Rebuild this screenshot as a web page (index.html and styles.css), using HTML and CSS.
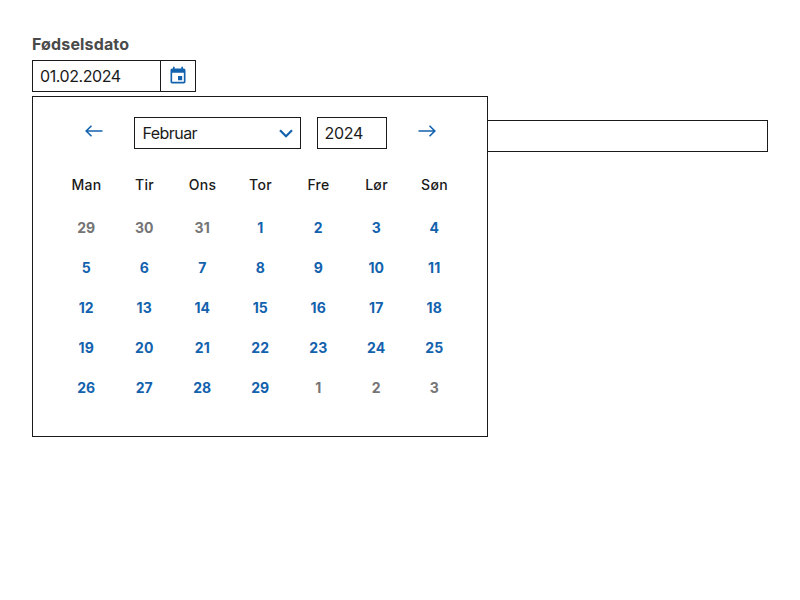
FILE: index.html
```
<!DOCTYPE html>
<html lang="nb">
<head>
<meta charset="utf-8">
<title>Fødselsdato</title>
<link rel="stylesheet" href="styles.css">
</head>
<body>
<main class="form">
  <label class="label" for="date">Fødselsdato</label>
  <div class="datefield">
    <input class="date-input" id="date" value="01.02.2024">
    <button class="date-button" aria-label="Velg dato">
      <svg width="20" height="20" viewBox="0 0 24 24" fill="currentColor"><path d="M17 12h-5v5h5v-5zM16 1v2H8V1H6v2H5c-1.110 0-1.990.9-1.990 2L3 19c0 1.100.890 2 2 2h14c1.100 0 2-.9 2-2V5c0-1.100-.9-2-2-2h-1V1h-2zm3 18H5V8h14v11z"/></svg>
    </button>
    <section class="calendar">
      <div class="nav">
        <button class="arrow" aria-label="Forrige måned"><svg width="18" height="12" viewBox="0 0 18 12"><path d="M6.500 .7 1.200 6l5.300 5.300M1.200 6H17.500"/></svg></button>
        <div class="month"><span class="month-name">Februar</span><svg width="14" height="9" viewBox="0 0 14 9"><path d="M1 1.300l6 6 6-6"/></svg></div>
        <input class="year" value="2024" aria-label="År">
        <button class="arrow" aria-label="Neste måned"><svg width="18" height="12" viewBox="0 0 18 12"><path d="M11.500 .7 16.800 6l-5.300 5.300M16.800 6H.5"/></svg></button>
      </div>
      <div class="grid">
        <span class="wd">Man</span><span class="wd">Tir</span><span class="wd">Ons</span><span class="wd">Tor</span><span class="wd">Fre</span><span class="wd">Lør</span><span class="wd">Søn</span>
        <span class="day out">29</span><span class="day out">30</span><span class="day out">31</span><span class="day">1</span><span class="day">2</span><span class="day">3</span><span class="day">4</span>
        <span class="day">5</span><span class="day">6</span><span class="day">7</span><span class="day">8</span><span class="day">9</span><span class="day">10</span><span class="day">11</span>
        <span class="day">12</span><span class="day">13</span><span class="day">14</span><span class="day">15</span><span class="day">16</span><span class="day">17</span><span class="day">18</span>
        <span class="day">19</span><span class="day">20</span><span class="day">21</span><span class="day">22</span><span class="day">23</span><span class="day">24</span><span class="day">25</span>
        <span class="day">26</span><span class="day">27</span><span class="day">28</span><span class="day">29</span><span class="day out">1</span><span class="day out">2</span><span class="day out">3</span>
      </div>
    </section>
  </div>
  <input class="text-input" aria-label="Tekst">
</main>
</body>
</html>
```
FILE: styles.css
```
* { box-sizing: border-box; }
body { margin: 0; min-height: 100vh; padding: 32px; background: #fff; color: #1a1a1a; font-family: Inter, sans-serif; font-size: 16px; line-height: 24px; }
input, button { font: inherit; color: inherit; margin: 0; border-radius: 0; background: #fff; }
.label { display: block; margin-bottom: 4px; font-weight: 700; letter-spacing: .15px; color: #4a4a4a; }
.datefield { position: relative; display: flex; height: 32px; margin-bottom: 28px; }
.date-input { width: 129px; border: 1px solid #1a1a1a; padding: 0 7px; letter-spacing: -.42px; }
.date-button { width: 35px; border: 1px solid #1a1a1a; border-left: 0; padding: 0; display: flex; align-items: center; justify-content: center; color: #1362ae; }
.text-input { display: block; width: 100%; height: 32px; border: 1px solid #1a1a1a; }
.calendar { position: absolute; top: 36px; left: 0; z-index: 1; width: 456px; height: 341px; background: #fff; border: 1px solid #1a1a1a; padding: 20px 24px; }
.nav { display: flex; height: 32px; justify-content: center; }
.arrow { width: 48px; height: 28px; border: 0; padding: 0; display: flex; align-items: center; justify-content: center; }
.arrow svg { fill: none; stroke: #1362ae; stroke-width: 1.600; }
.month { display: flex; align-items: center; justify-content: space-between; width: 167px; margin: 0 16px; padding: 0 7px; border: 1px solid #1a1a1a; }
.month-name { padding-left: 1px; letter-spacing: -.55px; }
.month svg { fill: none; stroke: #1362ae; stroke-width: 2.200; }
.year { width: 70px; margin-right: 16px; padding: 0 7px; border: 1px solid #1a1a1a; letter-spacing: -.3px; }
.grid { display: grid; grid-template-columns: repeat(7, 58px); grid-template-rows: 46px repeat(5, 40px); justify-content: center; margin-top: 13px; }
.wd, .day { display: flex; align-items: center; justify-content: center; font-size: 14px; }
.wd { padding-left: 1px; font-weight: 450; letter-spacing: .3px; }
.day { padding-left: .5px; font-weight: 700; letter-spacing: .1px; color: #1362ae; }
.out { color: #757575; }
```
